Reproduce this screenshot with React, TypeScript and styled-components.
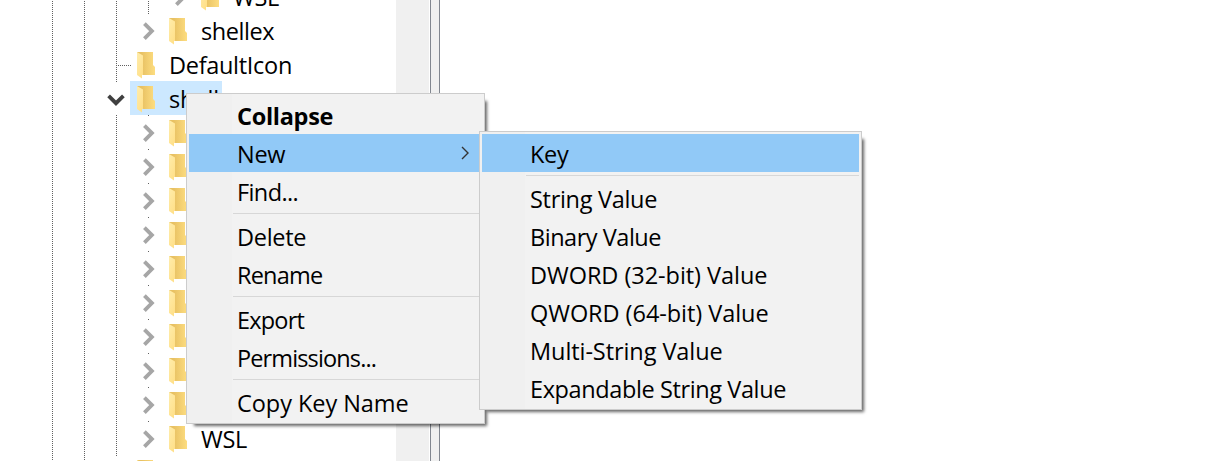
import React from 'react';
import styled, { createGlobalStyle, css } from 'styled-components';

const GlobalStyle = createGlobalStyle`
  * { box-sizing: border-box; }
  body {
    margin: 0;
    background: #fff;
    color: #000;
    font-family: 'Open Sans', 'Noto Sans', sans-serif;
    font-size: 23.5px;
    overflow: hidden;
  }
`;

const Window = styled.div`
  position: relative;
  display: flex;
  width: 1231px;
  height: 461px;
  overflow: hidden;
  background: #fff;
`;

const TreePane = styled.div`
  flex: 0 0 396px;
  height: 461px;
  overflow: hidden;
  padding-left: 36px;
`;

const TreeList = styled.div`
  display: flex;
  flex-direction: column;
  margin-top: -21px;
`;

const ScrollTrack = styled.div`
  flex: 0 0 33px;
  background: #f0f0f0;
`;

const Splitter = styled.div`
  flex: 0 0 10px;
  margin-left: 1px;
  background: #f0f0f0;
  border-left: 1px solid #828790;
  border-right: 1px solid #828790;
`;

const ValuesPane = styled.div`
  flex: 1;
  background: #fff;
`;

const TreeRow = styled.div`
  display: flex;
  flex: 0 0 34px;
  height: 34px;
`;

const dots = css`
  background-image: repeating-linear-gradient(to bottom, #606060 0 1px, transparent 1px 2px);
  background-position: 16px 0;
  background-repeat: no-repeat;
`;

const Guide = styled.div<{ $length: number }>`
  ${dots}
  display: flex;
  align-items: center;
  flex: 0 0 32px;
  background-size: 1px ${(p) => p.$length}px;
`;

const Branch = styled.span`
  width: 14px;
  height: 1px;
  margin: 2px 0 0 18px;
  background: repeating-linear-gradient(to right, #606060 0 1px, transparent 1px 2px);
`;

const Node = styled.div<{ $selected?: boolean }>`
  display: flex;
  align-items: center;
  height: 34px;
  margin-left: -2px;
  padding: 0 3px 0 7px;
  background: ${(p) => (p.$selected ? '#cce8ff' : 'transparent')};
`;

const NodeLabel = styled.span<{ $spacing: number }>`
  margin: 1px 0 0 13px;
  line-height: 32px;
  white-space: nowrap;
  letter-spacing: ${(p) => p.$spacing}px;
`;

const Menu = styled.div<{ $x: number; $y: number; $width: number }>`
  position: absolute;
  left: ${(p) => p.$x}px;
  top: ${(p) => p.$y}px;
  width: ${(p) => p.$width}px;
  padding: 2px;
  border: 1px solid #ccc;
  background: linear-gradient(to right, #f0f0f0 46px, #f2f2f2 46px);
  background-origin: border-box;
  box-shadow: 5px 5px 3px -3px rgba(0, 0, 0, 0.6);
`;

const MenuItem = styled.div<{ $active?: boolean; $bold?: boolean; $spacing: number }>`
  display: flex;
  align-items: center;
  justify-content: space-between;
  height: 38px;
  padding: 2px 13px 0 48px;
  line-height: 34px;
  white-space: nowrap;
  background: ${(p) => (p.$active ? '#91c9f7' : 'transparent')};
  font-weight: ${(p) => (p.$bold ? 700 : 400)};
  letter-spacing: ${(p) => p.$spacing}px;
`;

const Separator = styled.div`
  height: 1px;
  margin: 3px 0 3px 44px;
  background: #d7d7d7;
`;

const Expander = styled.svg`
  display: block;
  flex: none;
  margin: 2px 0 0 7px;
`;

const Folder = styled.svg`
  display: block;
  flex: none;
  margin-top: 1px;
`;

const SubmenuArrow = styled.svg`
  display: block;
  flex: none;
  margin-top: -2px;
`;

const FolderIcon = () => (
  <Folder width="19" height="29" viewBox="0 0 19 29">
    <defs>
      <linearGradient id="folderBack" x1="0" x2="1">
        <stop offset="0.25" stopColor="#e8c163" />
        <stop offset="1" stopColor="#fddd80" />
      </linearGradient>
      <linearGradient id="folderFront" x1="0" x2="0.6" y1="0" y2="1">
        <stop offset="0" stopColor="#ffedac" />
        <stop offset="1" stopColor="#ffe08a" />
      </linearGradient>
    </defs>
    <path d="M0 2H16V15L18 17V25H3Z" fill="url(#folderBack)" />
    <path d="M0 2L6 5.5V25H5V28.5L0 25Z" fill="url(#folderFront)" />
  </Folder>
);

const Collapsed = () => (
  <Expander width="18" height="18" viewBox="0 0 18 18">
    <path d="M5.4 1.6L12.9 9.1L5.4 16.6" fill="none" stroke="#a6a6a6" strokeWidth="3.8" />
  </Expander>
);

const Expanded = () => (
  <Expander width="18" height="18" viewBox="0 0 18 18">
    <path d="M1.6 5.8L9 13.2L16.4 5.8" fill="none" stroke="#404040" strokeWidth="3.8" />
  </Expander>
);

type Entry = {
  label: string;
  depth: number;
  state: 'collapsed' | 'expanded' | 'leaf';
  selected?: boolean;
  spacing?: number;
};

const child = (label: string, spacing?: number): Entry => ({ label, depth: 3, state: 'collapsed', spacing });

const entries: Entry[] = [
  { label: 'WSL', depth: 4, state: 'collapsed' },
  child('shellex', -0.42),
  { label: 'DefaultIcon', depth: 2, state: 'leaf' },
  { label: 'shell', depth: 2, state: 'expanded', selected: true, spacing: -0.1 },
  ...Array.from({ length: 9 }, () => child('')),
  child('WSL'),
  { label: '', depth: 2, state: 'collapsed' },
];

const Row = ({ entry }: { entry: Entry }) => (
  <TreeRow>
    {Array.from({ length: entry.depth }, (_, i) => (
      <Guide key={i} $length={34} />
    ))}
    <Guide $length={entry.state === 'leaf' ? 34 : 1}>
      {entry.state === 'leaf' && <Branch />}
      {entry.state === 'collapsed' && <Collapsed />}
      {entry.state === 'expanded' && <Expanded />}
    </Guide>
    <Node $selected={entry.selected}>
      <FolderIcon />
      <NodeLabel $spacing={entry.spacing ?? -0.3}>{entry.label}</NodeLabel>
    </Node>
  </TreeRow>
);

type Item = { label: string; bold?: boolean; active?: boolean; submenu?: boolean; spacing?: number } | null;

const keyMenu: Item[] = [
  { label: 'Collapse', bold: true },
  { label: 'New', active: true, submenu: true },
  { label: 'Find...', spacing: -0.6 },
  null,
  { label: 'Delete' },
  { label: 'Rename', spacing: -0.8 },
  null,
  { label: 'Export', spacing: -0.8 },
  { label: 'Permissions...', spacing: -0.87 },
  null,
  { label: 'Copy Key Name', spacing: -0.05 },
];

const newMenu: Item[] = [
  { label: 'Key', active: true },
  null,
  { label: 'String Value' },
  { label: 'Binary Value', spacing: -0.47 },
  { label: 'DWORD (32-bit) Value', spacing: -0.05 },
  { label: 'QWORD (64-bit) Value', spacing: -0.05 },
  { label: 'Multi-String Value', spacing: -0.08 },
  { label: 'Expandable String Value', spacing: -0.39 },
];

const PopupMenu = ({ items, x, y, width }: { items: Item[]; x: number; y: number; width: number }) => (
  <Menu $x={x} $y={y} $width={width}>
    {items.map((item, i) =>
      item ? (
        <MenuItem key={i} $active={item.active} $bold={item.bold} $spacing={item.spacing ?? -0.3}>
          <span>{item.label}</span>
          {item.submenu && (
            <SubmenuArrow width="8" height="14" viewBox="0 0 8 14">
              <path d="M1 1L7 7L1 13" fill="none" stroke="#333" strokeWidth="1.4" />
            </SubmenuArrow>
          )}
        </MenuItem>
      ) : (
        <Separator key={i} />
      ),
    )}
  </Menu>
);

export default function App() {
  return (
    <Window>
      <GlobalStyle />
      <TreePane>
        <TreeList>
          {entries.map((entry, i) => (
            <Row key={i} entry={entry} />
          ))}
        </TreeList>
      </TreePane>
      <ScrollTrack />
      <Splitter />
      <ValuesPane />
      <PopupMenu items={keyMenu} x={186} y={93} width={299} />
      <PopupMenu items={newMenu} x={479} y={131} width={383} />
    </Window>
  );
}
